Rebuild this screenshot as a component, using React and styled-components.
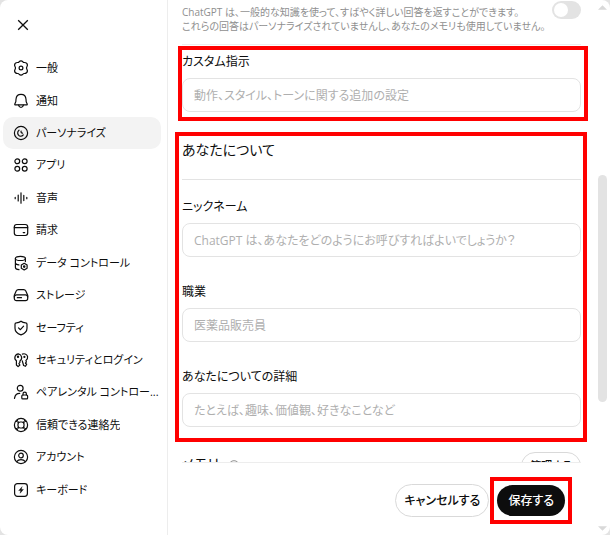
import React, { useState } from 'react'
import styled, { createGlobalStyle } from 'styled-components'

const GlobalStyle = createGlobalStyle`
    * {
        box-sizing: border-box;
    }
    body {
        margin: 0;
        background-color: #e3e3e3;
        color: #0d0d0d;
    }
    body, button, input {
        font-family: "Open Sans", "Noto Sans CJK JP", sans-serif;
        font-feature-settings: "palt";
        font-size: 12px;
        line-height: 20px;
    }
`;

const icons = {
    general: (
        <>
            <path d="M8 .9c.8 0 1.400.4 1.900 1 .3.400.8.6 1.300.6 1.700-.1 3 .8 3.200 2.300.1.6-.1 1.100-.4 1.600-.6.9-.6 2.300 0 3.200.3.5.5 1 .4 1.600-.2 1.500-1.500 2.400-3.200 2.300-.5 0-1 .2-1.300.6-.5.6-1.100 1-1.900 1s-1.400-.4-1.900-1c-.3-.4-.8-.6-1.300-.6-1.700.1-3-.8-3.200-2.300-.1-.6.1-1.100.4-1.600.6-.9.6-2.300 0-3.200-.3-.5-.5-1-.4-1.600.2-1.500 1.500-2.400 3.200-2.300.5 0 1-.2 1.300-.6.5-.6 1.100-1 1.900-1z" />
            <circle cx="8" cy="8" r="1.900" />
        </>
    ),
    bell: (
        <>
            <path d="M8 1.400c-2.900 0-4.800 2-5 4.800l-.2 2.600-1 2.100c-.2.500.1.900.600.900h11.200c.500 0 .8-.4.600-.9l-1-2.100-.2-2.600c-.2-2.800-2.100-4.800-5-4.800z" />
            <path d="M5.600 12.200c.3 1.500 1.200 2.300 2.400 2.300s2.100-.8 2.400-2.300" />
        </>
    ),
    personal: (
        <>
            <circle cx="8" cy="8" r="6.600" />
            <path d="M6 5.200c-1.900 1.500-1.700 4.400.2 5.600 1.500.8 3.100.3 4.100-.9" />
            <path d="M8.100 6.200c-.3 1.200.3 2 1.500 1.900" />
        </>
    ),
    apps: (
        <>
            <circle cx="4.300" cy="4.300" r="2.400" />
            <circle cx="11.700" cy="4.300" r="2.400" />
            <circle cx="4.300" cy="11.700" r="2.400" />
            <circle cx="11.700" cy="11.700" r="2.400" />
        </>
    ),
    voice: <path d="M2.200 7.300v1.400M5.200 5v6M8 2.800v10.400M10.800 5.400v5.200M13.800 7.300v1.400" />,
    billing: (
        <>
            <rect x="1.300" y="2.500" width="13.400" height="11" rx="2.400" />
            <path d="M1.300 5.700h13.400M10.200 10.600h1.500" />
        </>
    ),
    data: (
        <>
            <ellipse cx="7.400" cy="3.400" rx="5" ry="2.100" />
            <path d="M2.400 3.400v9c0 1.200 1.500 2 3.600 2.200M12.400 3.400v3.200M2.400 7.800c0 1.100 1.400 1.900 3.500 2.100" />
            <path d="M11.200 8.300l2.900 1.700v3.300l-2.900 1.700-2.900-1.700V10z" />
            <circle cx="11.200" cy="11.600" r=".7" />
        </>
    ),
    storage: (
        <>
            <rect x="1.300" y="7.800" width="13.400" height="5.900" rx="2.200" />
            <path d="M1.300 10V8.300l1.900-4.200c.4-1 1.100-1.500 2.200-1.500h5.200c1.100 0 1.800.5 2.200 1.500l1.900 4.200V10M4.300 10.700h4.200" />
        </>
    ),
    safety: (
        <>
            <path d="M8 1.200c1.300 1.100 3 1.600 4.700 1.700.8 0 1.300.5 1.300 1.300v4c0 3.200-2.300 5.400-6 6.700-3.700-1.300-6-3.500-6-6.700v-4c0-.8.5-1.300 1.300-1.300C5 2.800 6.700 2.300 8 1.200z" />
            <path d="M5.500 7.900l1.900 1.800 3.200-3.500" />
        </>
    ),
    security: (
        <>
            <path d="M5.400 1.800a3.900 3.900 0 0 0-2 7v4.200l1.700 1.600 1.800-1.600-1-1.400 1-1.200V8.900a3.900 3.900 0 0 0-1.500-7.100z" />
            <circle cx="5" cy="4.800" r=".6" />
            <path d="M9.400 2.100c2.300-1 4.800.3 5.200 2.600.3 1.700-.5 3.100-1.700 3.900l.5 1.300-.9 1.300 1.200 1.100-1.200 2-1.900-.8-1.300-4.600" />
            <circle cx="11.400" cy="4.900" r=".5" />
        </>
    ),
    parental: (
        <>
            <circle cx="7.200" cy="4.200" r="2.900" />
            <path d="M1.500 14.300c.5-3 2.600-4.900 5.200-4.900" />
            <rect x="8.800" y="11" width="5.800" height="3.900" rx=".9" />
            <path d="M10 11V9.900c0-2.300 3.400-2.300 3.400 0V11" />
        </>
    ),
    contact: (
        <>
            <circle cx="8" cy="8" r="6.600" />
            <rect x="5" y="5" width="6" height="6" rx="2.200" />
            <path d="M3.300 4.300l2.300 1.500M4.300 3.300l1.500 2.300M12.700 4.300l-2.300 1.500M11.700 3.300l-1.500 2.300M3.300 11.700l2.300-1.500M4.300 12.700l1.500-2.300M12.700 11.700l-2.300-1.500M11.700 12.700l-1.500-2.300" strokeWidth="1" />
        </>
    ),
    account: (
        <>
            <circle cx="8" cy="8" r="6.600" />
            <circle cx="8" cy="6.500" r="2.300" />
            <path d="M3.700 12.700c1-1.400 2.500-2.100 4.300-2.100s3.300.7 4.300 2.100" />
        </>
    ),
    keyboard: (
        <>
            <rect x="1.600" y="1.600" width="12.800" height="12.800" rx="2.800" />
            <path d="M8.900 4.900L5.700 8.600h2l-.5 2.600 3.200-3.800h-2z" fill="currentColor" strokeWidth=".4" />
        </>
    ),
};

const menu = [
    { icon: 'general', label: '一般' },
    { icon: 'bell', label: '通知' },
    { icon: 'personal', label: 'パーソナライズ' },
    { icon: 'apps', label: 'アプリ' },
    { icon: 'voice', label: '音声' },
    { icon: 'billing', label: '請求' },
    { icon: 'data', label: 'データ コントロール' },
    { icon: 'storage', label: 'ストレージ' },
    { icon: 'safety', label: 'セーフティ' },
    { icon: 'security', label: 'セキュリティとログイン' },
    { icon: 'parental', label: 'ペアレンタル コントロー...' },
    { icon: 'contact', label: '信頼できる連絡先' },
    { icon: 'account', label: 'アカウント' },
    { icon: 'keyboard', label: 'キーボード' },
];

const aboutFields = [
    { id: 'nickname', label: 'ニックネーム', placeholder: 'ChatGPT は、あなたをどのようにお呼びすればよいでしょうか？' },
    { id: 'job', label: '職業', placeholder: '医薬品販売員' },
    { id: 'details', label: 'あなたについての詳細', placeholder: 'たとえば、趣味、価値観、好きなことなど' },
];

function Icon({ name }) {
    return <Glyph viewBox="0 0 16 16" aria-hidden="true">{icons[name]}</Glyph>
}

function TextField({ id, label, placeholder }) {
    return (
        <Field>
            <label htmlFor={id}>{label}</label>
            <Input id={id} type="text" placeholder={placeholder} />
        </Field>
    )
}

function App() {
    const [active, setActive] = useState('personal')

    return (
        <>
            <GlobalStyle />
            <Dialog>
                <Sidebar>
                    <CloseButton aria-label="閉じる">
                        <svg width="12" height="12" viewBox="0 0 12 12" aria-hidden="true">
                            <path d="M1.200 1.200l9.600 9.600M10.800 1.200l-9.600 9.600" fill="none" stroke="currentColor" strokeWidth="1.300" />
                        </svg>
                    </CloseButton>
                    <Menu>
                        {menu.map((item) => (
                            <MenuItem key={item.icon} $active={item.icon === active} onClick={() => setActive(item.icon)}>
                                <Icon name={item.icon} />
                                <span>{item.label}</span>
                            </MenuItem>
                        ))}
                    </Menu>
                </Sidebar>
                <Panel>
                    <Content>
                        <Intro>
                            <p id="fast">
                                ChatGPT は、一般的な知識を使って、すばやく詳しい回答を返すことができます。
                                <br />
                                これらの回答はパーソナライズされていませんし、あなたのメモリも使用していません。
                            </p>
                            <Switch type="checkbox" role="switch" aria-labelledby="fast" />
                        </Intro>
                        <CustomSection>
                            <TextField id="custom" label="カスタム指示" placeholder="動作、スタイル、トーンに関する追加の設定" />
                        </CustomSection>
                        <AboutSection>
                            <Heading>あなたについて</Heading>
                            <FieldList>
                                {aboutFields.map((field) => <TextField key={field.id} {...field} />)}
                            </FieldList>
                        </AboutSection>
                        <MemoryRow>
                            <h2>メモリ</h2>
                            <svg width="12" height="12" viewBox="0 0 12 12" aria-hidden="true">
                                <circle cx="6" cy="6" r="5.300" fill="none" stroke="#8f8f8f" />
                                <path d="M4.500 4.800c0-2 3-2 3 0 0 1-1.500 1-1.500 2M6 8v1" fill="none" stroke="#8f8f8f" />
                            </svg>
                            <Button $small>管理する</Button>
                        </MemoryRow>
                    </Content>
                    <Footer>
                        <Button>キャンセルする</Button>
                        <SaveFrame>
                            <Button $primary>保存する</Button>
                        </SaveFrame>
                    </Footer>
                </Panel>
                <Scrollbar aria-hidden="true">
                    <Arrow viewBox="0 0 10 6"><path d="M0 6l5-5 5 5z" /></Arrow>
                    <Track>
                        <Thumb />
                    </Track>
                    <Arrow viewBox="0 0 10 6"><path d="M0 0l5 5 5-5z" /></Arrow>
                </Scrollbar>
            </Dialog>
        </>
    )
}

export default App

const Dialog = styled.div`
    display: flex;
    height: 100vh;
    min-height: 500px;
    overflow: hidden;
    border-radius: 8px;
    background-color: white;
`;

const Sidebar = styled.aside`
    display: flex;
    flex-direction: column;
    flex: none;
    width: 168px;
    padding: 13px 6px 29px 3px;
    border-right: 1px solid #ededed;
`;

const CloseButton = styled.button`
    display: flex;
    align-items: center;
    justify-content: center;
    width: 24px;
    height: 24px;
    margin: 0 0 15px 8px;
    padding: 0;
    border: none;
    background: none;
    color: #0d0d0d;
`;

const Menu = styled.nav`
    display: flex;
    flex-direction: column;
    flex: 1;
`;

const MenuItem = styled.button`
    display: flex;
    align-items: center;
    flex: 1;
    gap: 7px;
    padding: 0 2px 0 10px;
    border: none;
    border-radius: 10px;
    background-color: ${(props) => (props.$active ? '#f3f3f3' : 'transparent')};
    color: #0d0d0d;
    font-size: 11px;
    text-align: left;

    span {
        overflow: hidden;
        text-overflow: ellipsis;
        white-space: nowrap;
    }
`;

const Glyph = styled.svg`
    flex: none;
    width: 16px;
    height: 16px;
    fill: none;
    stroke: currentColor;
    stroke-width: 1.2;
    stroke-linecap: round;
    stroke-linejoin: round;
`;

const Panel = styled.main`
    display: flex;
    flex-direction: column;
    flex: 1;
    min-width: 0;
    padding-right: 17px;
`;

/* the right side reaches past the fields so the frames are not clipped */
const Content = styled.div`
    flex: 1;
    min-height: 0;
    margin-right: -12px;
    padding: 0 12px 0 14px;
    overflow: hidden;
`;

const Intro = styled.div`
    display: flex;
    align-items: flex-start;
    justify-content: space-between;
    height: 45px;
    padding-top: 1px;
    margin-bottom: 1px;
    border-bottom: 1px solid #ededed;

    p {
        margin: 4px 0 0;
        color: #8f8f8f;
        font-size: 10px;
        line-height: 14px;
        white-space: nowrap;
    }
`;

const Switch = styled.input`
    appearance: none;
    flex: none;
    width: 29px;
    height: 18px;
    margin: 0;
    padding: 2px;
    border-radius: 9px;
    background-color: #e3e3e3;

    &::before {
        content: "";
        display: block;
        width: 14px;
        height: 14px;
        border-radius: 50%;
        background-color: white;
    }

    &:checked {
        background-color: #0d0d0d;
    }

    &:checked::before {
        margin-left: auto;
    }
`;

const Frame = styled.section`
    border: 4px solid #ff0000;
`;

const CustomSection = styled(Frame)`
    margin: 0 -7px 11px -4px;
    padding: 2px 3px 5px 0;
`;

const AboutSection = styled(Frame)`
    margin: 0 -6px 10px -7px;
    padding: 4px 2px 11px 3px;
`;

const Heading = styled.h2`
    margin: 0;
    padding-bottom: 19px;
    border-bottom: 1px solid #e3e3e3;
    font-size: 14px;
    font-weight: 400;
`;

const FieldList = styled.div`
    display: flex;
    flex-direction: column;
    gap: 25px;
    padding-top: 17px;
`;

const Field = styled.div`
    display: flex;
    flex-direction: column;
    gap: 6px;
`;

const Input = styled.input`
    width: 100%;
    height: 34px;
    padding: 0 11px;
    border: 1px solid #e3e3e3;
    border-radius: 8px;
    background-color: white;
    color: #0d0d0d;

    &::placeholder {
        color: #afafaf;
        opacity: 1;
    }
`;

const MemoryRow = styled.div`
    display: flex;
    align-items: center;
    gap: 9px;

    h2 {
        margin: 0;
        padding-bottom: 4px;
        font-size: 14px;
        font-weight: 400;
    }

    button {
        margin-left: auto;
    }
`;

const Button = styled.button`
    height: ${(props) => (props.$small ? '28px' : props.$primary ? '31px' : '33px')};
    padding: 0 ${(props) => (props.$small ? '8px' : props.$primary ? '11px' : '8px')};
    border: ${(props) => (props.$primary ? 'none' : '1px solid #d9d9d9')};
    border-radius: 17px;
    background-color: ${(props) => (props.$primary ? '#0d0d0d' : 'white')};
    color: ${(props) => (props.$primary ? 'white' : '#0d0d0d')};
    font-size: ${(props) => (props.$small ? '11px' : '12px')};
    font-weight: 500;
    white-space: nowrap;
`;

const Footer = styled.footer`
    display: flex;
    align-items: center;
    justify-content: flex-end;
    height: 73px;
    margin-left: 14px;
    padding: 3px 9px 0 0;
    border-top: 1px solid #ededed;
`;

const SaveFrame = styled(Frame)`
    margin-left: 1px;
    padding: 4px 3px;

    button {
        display: block;
    }
`;

const Scrollbar = styled.div`
    display: flex;
    flex-direction: column;
    align-items: center;
    flex: none;
    width: 12px;
    padding: 4px 3px 3px 0;
`;

const Arrow = styled.svg`
    flex: none;
    width: 9px;
    height: 6px;
    fill: #d9d9d9;
`;

const Track = styled.div`
    display: grid;
    grid-template-rows: 32fr 44fr 24fr;
    flex: 1;
    width: 9px;
`;

const Thumb = styled.div`
    grid-row: 2;
    border-radius: 5px;
    background-color: #e3e3e3;
`;
